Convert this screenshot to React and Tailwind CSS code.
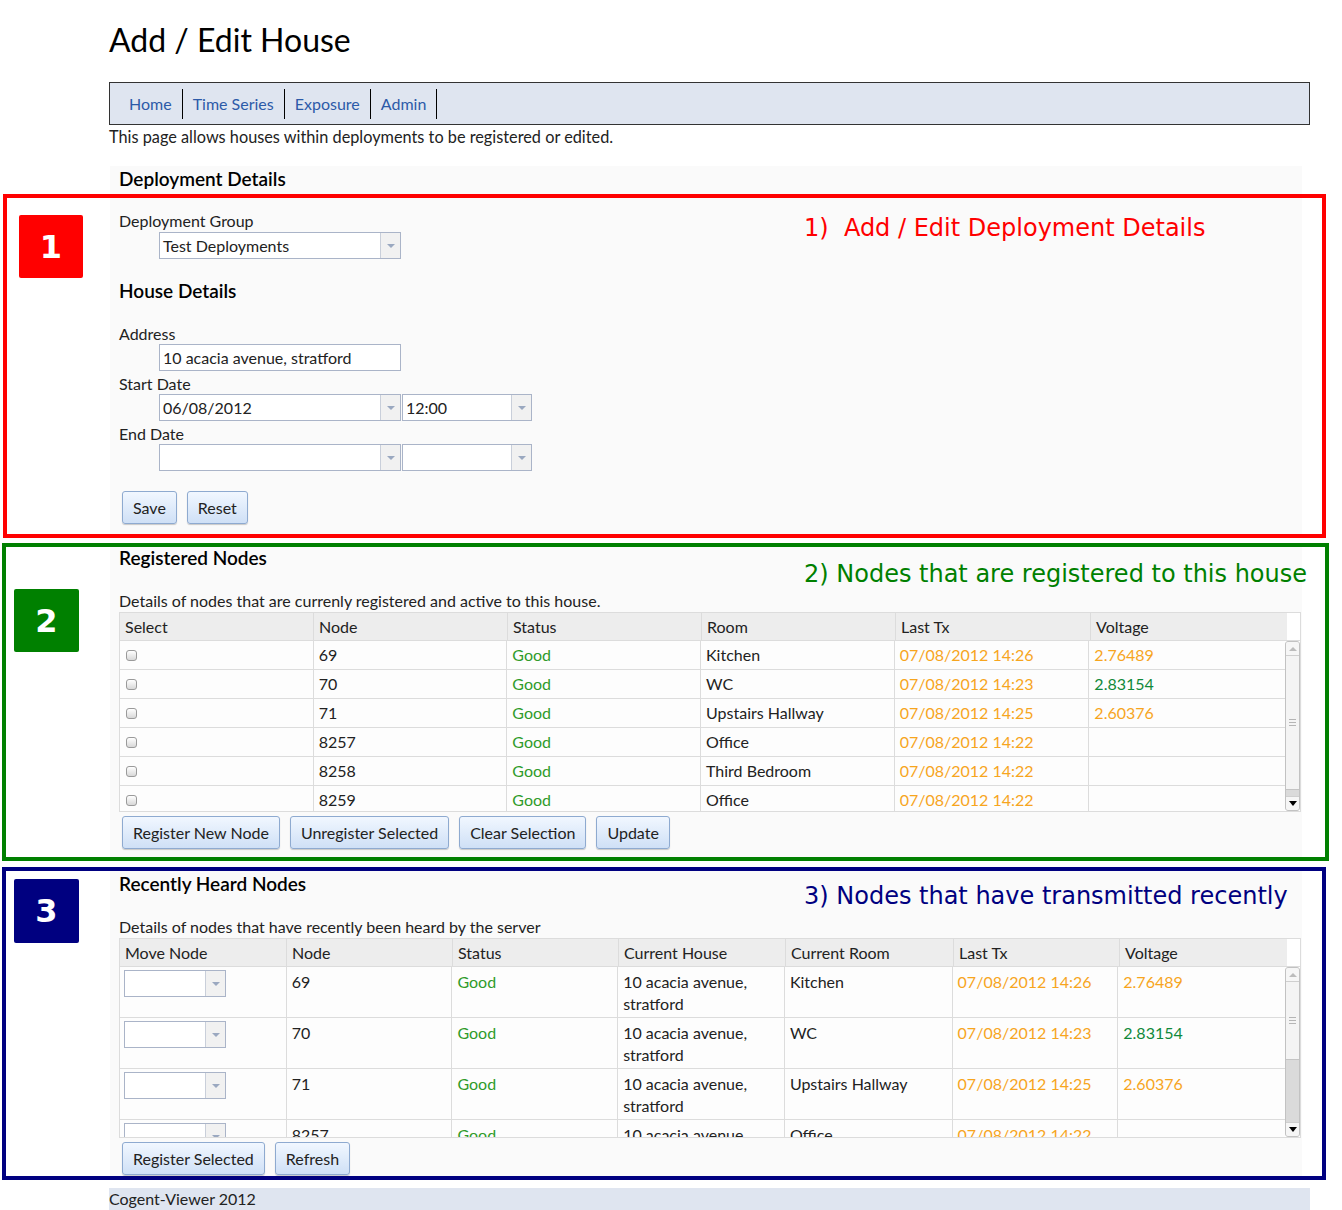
const ORANGE = "text-[#f7a51e]";
const GOOD = "text-[#2f9b2a]";
const VGREEN = "text-[#10893a]";

const Arrow = () => (
  <div className="w-[20px] shrink-0 border-l border-[#c9cfda] bg-[#f1f1f1] flex items-center justify-center">
    <div className="border-x-[4px] border-x-transparent border-t-[4px] border-t-[#9aa8c0]" />
  </div>
);

const Select = ({ value, w }) => (
  <div className={`flex h-[27px] border border-[#aab4c8] bg-white ${w}`}>
    <div className="flex-1 pl-[3px] leading-[25px] truncate">{value}</div>
    <Arrow />
  </div>
);

const Btn = ({ children }) => (
  <button className="h-[33px] px-[10px] rounded-[3px] border border-[#8eaad0] bg-linear-to-b from-[#f1f7ff] to-[#cfe0f6] text-[16px] text-[#222] shadow-[0_1px_1px_rgba(0,0,0,0.2)]">
    {children}
  </button>
);

const Checkbox = () => (
  <span className="inline-block w-[11px] h-[11px] rounded-[3px] border border-[#9a9a9a] bg-linear-to-b from-white to-[#d8d8d8]" />
);

const Scrollbar = ({ thumb }) => (
  <div className="w-[15px] shrink-0 flex flex-col border border-[#c2c2c2] rounded-[3px] bg-[#dadada] overflow-hidden">
    <div className="h-[14px] shrink-0 bg-[#f6f6f6] border-b border-[#cfcfcf] flex items-center justify-center">
      <div className="border-x-[4px] border-x-transparent border-b-[4px] border-b-[#bcbcbc]" />
    </div>
    <div className={`${thumb} shrink-0 bg-[#f4f4f4] border-b border-[#c4c4c4] flex items-center justify-center`}>
      <div className="flex flex-col gap-[2px]">
        <span className="block w-[7px] h-px bg-[#b5b5b5]" />
        <span className="block w-[7px] h-px bg-[#b5b5b5]" />
        <span className="block w-[7px] h-px bg-[#b5b5b5]" />
      </div>
    </div>
    <div className="flex-1" />
    <div className="h-[14px] shrink-0 bg-[#f6f6f6] border-t border-[#cfcfcf] flex items-center justify-center">
      <div className="border-x-[4px] border-x-transparent border-t-[5px] border-t-black" />
    </div>
  </div>
);

const Badge = ({ children, cls }) => (
  <div
    className={`flex items-center justify-center text-white text-[32px] font-bold rounded-[2px] ${cls}`}
    style={{ fontFamily: '"DejaVu Sans", sans-serif' }}
  >
    {children}
  </div>
);

const Note = ({ children, cls }) => (
  <div
    className={`text-[24px] leading-[28px] whitespace-pre ${cls}`}
    style={{ fontFamily: '"DejaVu Sans", sans-serif' }}
  >
    {children}
  </div>
);

const registered = [
  ["69", "Kitchen", "07/08/2012 14:26", "2.76489", ORANGE],
  ["70", "WC", "07/08/2012 14:23", "2.83154", VGREEN],
  ["71", "Upstairs Hallway", "07/08/2012 14:25", "2.60376", ORANGE],
  ["8257", "Office", "07/08/2012 14:22", "", ""],
  ["8258", "Third Bedroom", "07/08/2012 14:22", "", ""],
  ["8259", "Office", "07/08/2012 14:22", "", ""],
];

const heard = [
  ["69", "Kitchen", "07/08/2012 14:26", "2.76489", ORANGE],
  ["70", "WC", "07/08/2012 14:23", "2.83154", VGREEN],
  ["71", "Upstairs Hallway", "07/08/2012 14:25", "2.60376", ORANGE],
  ["8257", "Office", "07/08/2012 14:22", "", ""],
];

const cols2 = ["w-[194px]", "w-[194px]", "w-[194px]", "w-[194px]", "w-[195px]", "w-[196px]"];
const cols3 = ["w-[167px]", "w-[166px]", "w-[166px]", "w-[167px]", "w-[168px]", "w-[166px]", "w-[167px]"];

const Head = ({ labels, widths }) => (
  <div className="flex h-[28px] border-b border-[#dcdcdc]">
    <div className="flex bg-[#ededed]">
      {labels.map((l, i) => (
        <div key={l} className={`${widths[i]} pl-[5px] leading-[27px] border-r border-[#dcdcdc] last:border-r-0`}>
          {l}
        </div>
      ))}
    </div>
  </div>
);

const RegisteredTable = () => (
  <div className="w-[1182px] border border-[#dcdcdc] bg-white">
    <Head labels={["Select", "Node", "Status", "Room", "Last Tx", "Voltage"]} widths={cols2} />
    <div className="flex h-[170px]">
      <div className="w-[1167px] overflow-hidden">
        {registered.map((r) => (
          <div key={r[0]} className="flex h-[29px] border-b border-[#dcdcdc] bg-[#fdfdfd]">
            <div className={`${cols2[0]} pl-[6px] flex items-center border-r border-[#dcdcdc]`}>
              <Checkbox />
            </div>
            <div className={`${cols2[1]} pl-[5px] leading-[28px] border-r border-[#dcdcdc]`}>{r[0]}</div>
            <div className={`${cols2[2]} pl-[5px] leading-[28px] border-r border-[#dcdcdc] ${GOOD}`}>Good</div>
            <div className={`${cols2[3]} pl-[5px] leading-[28px] border-r border-[#dcdcdc]`}>{r[1]}</div>
            <div className={`${cols2[4]} pl-[5px] leading-[28px] border-r border-[#dcdcdc] ${ORANGE}`}>{r[2]}</div>
            <div className={`${cols2[5]} pl-[5px] leading-[28px] ${r[4]}`}>{r[3]}</div>
          </div>
        ))}
      </div>
      <Scrollbar thumb="h-[134px]" />
    </div>
  </div>
);

const HeardTable = () => (
  <div className="w-[1182px] border border-[#dcdcdc] bg-white">
    <Head
      labels={["Move Node", "Node", "Status", "Current House", "Current Room", "Last Tx", "Voltage"]}
      widths={cols3}
    />
    <div className="flex h-[170px]">
      <div className="w-[1167px] overflow-hidden">
        {heard.map((r) => (
          <div key={r[0]} className="flex h-[51px] shrink-0 border-b border-[#dcdcdc] bg-[#fdfdfd] leading-[22px]">
            <div className={`${cols3[0]} pl-[4px] pt-[3px] border-r border-[#dcdcdc]`}>
              <Select value="" w="w-[102px]" />
            </div>
            <div className={`${cols3[1]} pl-[5px] pt-[4px] border-r border-[#dcdcdc]`}>{r[0]}</div>
            <div className={`${cols3[2]} pl-[5px] pt-[4px] border-r border-[#dcdcdc] ${GOOD}`}>Good</div>
            <div className={`${cols3[3]} pl-[5px] pt-[4px] border-r border-[#dcdcdc]`}>
              <div>10 acacia avenue,</div>
              <div>stratford</div>
            </div>
            <div className={`${cols3[4]} pl-[5px] pt-[4px] border-r border-[#dcdcdc]`}>{r[1]}</div>
            <div className={`${cols3[5]} pl-[5px] pt-[4px] border-r border-[#dcdcdc] ${ORANGE}`}>{r[2]}</div>
            <div className={`${cols3[6]} pl-[5px] pt-[4px] ${r[4]}`}>{r[3]}</div>
          </div>
        ))}
      </div>
      <Scrollbar thumb="h-[78px]" />
    </div>
  </div>
);

const App = () => {
  return (
    <div
      className="w-[1342px] min-h-[1210px] bg-white text-[16px] text-[#222]"
      style={{ fontFamily: 'Lato, "Liberation Sans", sans-serif' }}
    >
      <div className="pl-[109px] pt-[20px] h-[82px]">
        <h1 className="text-[32px] leading-[40px] text-black">Add / Edit House</h1>
      </div>

      <nav className="ml-[109px] w-[1201px] h-[43px] border border-[#333] bg-[#dfe5f0] flex items-center pl-[9px]">
        {["Home", "Time Series", "Exposure", "Admin"].map((l) => (
          <a key={l} className="px-[10px] h-[30px] leading-[30px] border-r border-black text-[#2c5aa8] text-[16px]">
            {l}
          </a>
        ))}
      </nav>
      <p className="ml-[109px] leading-[24px] text-[16.3px]">
        This page allows houses within deployments to be registered or edited.
      </p>

      <div className="ml-[110px] mt-[17px] w-[1192px] h-[28px] bg-[#fafafa] pl-[9px] pt-[2px]">
        <h2 className="text-[19px] leading-[22px] font-semibold text-black">Deployment Details</h2>
      </div>

      {/* 1 */}
      <section className="ml-[3px] w-[1323px] border-4 border-[#ff0000] flex">
        <div className="w-[103px] shrink-0">
          <Badge cls="ml-[12px] mt-[17px] w-[64px] h-[63px] bg-[#ff0000]">1</Badge>
        </div>
        <div className="w-[1192px] bg-[#fafafa] pl-[9px] pt-[13px] pb-[10px] flex">
          <div className="w-[685px] shrink-0">
            <div className="leading-[20px]">Deployment Group</div>
            <div className="ml-[40px] mt-[1px]">
              <Select value="Test Deployments" w="w-[242px]" />
            </div>
            <h3 className="mt-[21px] text-[19px] leading-[22px] font-semibold text-black">House Details</h3>
            <div className="mt-[22px] leading-[20px]">Address</div>
            <div className="ml-[40px] w-[242px] h-[27px] border border-[#aab4c8] bg-white pl-[3px] leading-[25px]">
              10 acacia avenue, stratford
            </div>
            <div className="mt-[3px] leading-[20px]">Start Date</div>
            <div className="ml-[40px] flex gap-[1px]">
              <Select value="06/08/2012" w="w-[242px]" />
              <Select value="12:00" w="w-[130px]" />
            </div>
            <div className="mt-[3px] leading-[20px]">End Date</div>
            <div className="ml-[40px] flex gap-[1px]">
              <Select value="" w="w-[242px]" />
              <Select value="" w="w-[130px]" />
            </div>
            <div className="mt-[20px] ml-[3px] flex gap-[10px]">
              <Btn>Save</Btn>
              <Btn>Reset</Btn>
            </div>
          </div>
          <Note cls="mt-[3px] text-[#ff0000]">{"1)  Add / Edit Deployment Details"}</Note>
        </div>
      </section>

      {/* 2 */}
      <section className="ml-[2px] mt-[5px] w-[1327px] border-4 border-[#008000] flex">
        <div className="w-[104px] shrink-0">
          <Badge cls="ml-[8px] mt-[42px] w-[65px] h-[63px] bg-[#008000]">2</Badge>
        </div>
        <div className="w-[1192px] bg-[#fafafa] pl-[9px] pb-[8px]">
          <div className="flex h-[41px]">
            <h2 className="w-[685px] shrink-0 text-[19px] leading-[22px] font-semibold text-black">Registered Nodes</h2>
            <Note cls="mt-[13px] text-[#008000]">{"2) Nodes that are registered to this house"}</Note>
          </div>
          <div className="mt-[3px] leading-[20px]">Details of nodes that are currenly registered and active to this house.</div>
          <div className="mt-[1px]">
            <RegisteredTable />
          </div>
          <div className="mt-[4px] ml-[3px] flex gap-[10px]">
            <Btn>Register New Node</Btn>
            <Btn>Unregister Selected</Btn>
            <Btn>Clear Selection</Btn>
            <Btn>Update</Btn>
          </div>
        </div>
      </section>

      {/* 3 */}
      <section className="ml-[2px] mt-[6px] w-[1324px] border-4 border-[#000080] flex">
        <div className="w-[104px] shrink-0">
          <Badge cls="ml-[8px] mt-[8px] w-[65px] h-[64px] bg-[#000080]">3</Badge>
        </div>
        <div className="w-[1192px] bg-[#fafafa] pl-[9px] pt-[2px] pb-[1px]">
          <div className="flex h-[37px]">
            <h2 className="w-[685px] shrink-0 text-[19px] leading-[22px] font-semibold text-black">Recently Heard Nodes</h2>
            <Note cls="mt-[9px] text-[#000080]">{"3) Nodes that have transmitted recently"}</Note>
          </div>
          <div className="mt-[7px] leading-[20px]">Details of nodes that have recently been heard by the server</div>
          <div className="mt-[1px]">
            <HeardTable />
          </div>
          <div className="mt-[4px] ml-[3px] flex gap-[10px]">
            <Btn>Register Selected</Btn>
            <Btn>Refresh</Btn>
          </div>
        </div>
      </section>

      <footer className="ml-[109px] mt-[8px] w-[1201px] h-[22px] bg-[#dfe5f0] leading-[22px]">Cogent-Viewer 2012</footer>
    </div>
  );
};

export default App;
